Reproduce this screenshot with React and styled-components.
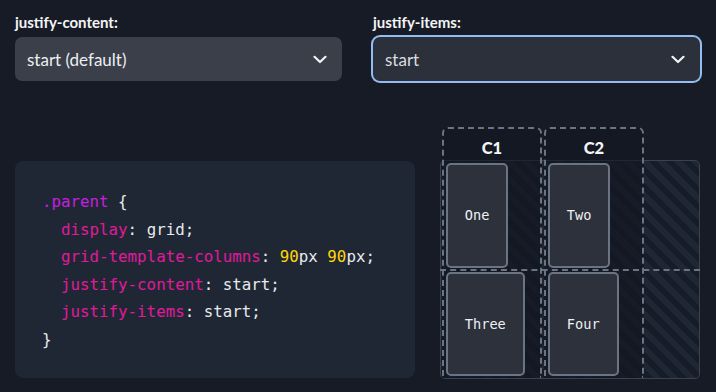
import styled, { createGlobalStyle } from "styled-components";

const GlobalStyle = createGlobalStyle`
    * {
        box-sizing: border-box;
    }
    body {
        margin: 0;
        background-color: #161b26;
        font-family: Lato, "Noto Sans", sans-serif;
        color: #f1f3f6;
    }
`

const controls = [
    { label: "justify-content:", value: "start (default)", focused: false },
    { label: "justify-items:", value: "start", focused: true }
];

const codeLines = [
    [{ t: ".parent", c: "selector" }, { t: " {", c: "plain" }],
    [{ t: "  display", c: "prop" }, { t: ": grid;", c: "plain" }],
    [
        { t: "  grid-template-columns", c: "prop" },
        { t: ": ", c: "plain" },
        { t: "90", c: "num" },
        { t: "px ", c: "plain" },
        { t: "90", c: "num" },
        { t: "px;", c: "plain" }
    ],
    [{ t: "  justify-content", c: "prop" }, { t: ": start;", c: "plain" }],
    [{ t: "  justify-items", c: "prop" }, { t: ": start;", c: "plain" }],
    [{ t: "}", c: "plain" }]
];

const items = ["One", "Two", "Three", "Four"];

function Chevron() {
    return (
        <svg width="14" height="9" viewBox="0 0 14 9" fill="none">
            <path
                d="M1.5 1.8 L7 7 L12.5 1.8"
                stroke="#f3f4f6"
                strokeWidth="2.2"
                strokeLinecap="round"
                strokeLinejoin="round"
            />
        </svg>
    );
}

export default function App() {
    return (
        <Page>
            <GlobalStyle />
            <Controls>
                {controls.map((control) => (
                    <Field key={control.label}>
                        <Label>{control.label}</Label>
                        <Select focused={control.focused}>
                            <span>{control.value}</span>
                            <Chevron />
                        </Select>
                    </Field>
                ))}
            </Controls>
            <Demo>
                <CodeBlock>
                    {codeLines.map((line, i) => (
                        <CodeLine key={i}>
                            {line.map((part, j) => (
                                <Token key={j} kind={part.c}>{part.t}</Token>
                            ))}
                        </CodeLine>
                    ))}
                </CodeBlock>
                <Visual>
                    <ColumnGuide left={2}>
                        <ColumnName>C1</ColumnName>
                    </ColumnGuide>
                    <ColumnGuide left={104}>
                        <ColumnName>C2</ColumnName>
                    </ColumnGuide>
                    <GridBox>
                        <RowLine />
                        {items.map((item) => (
                            <Item key={item}>{item}</Item>
                        ))}
                    </GridBox>
                </Visual>
            </Demo>
        </Page>
    );
}

const Page = styled.div`
    width: 716px;
    height: 392px;
    padding: 11px 16px 0 15px;
    overflow: hidden;
`
const Controls = styled.div`
    display: grid;
    grid-template-columns: 327px 327px;
    column-gap: 31px;
`
const Field = styled.div`
    display: flex;
    flex-direction: column;
`
const Label = styled.span`
    font-size: 15px;
    font-weight: 700;
    line-height: 22px;
    margin-bottom: 4px;
    color: #f3f4f6;
`
const Select = styled.div`
    height: 44px;
    display: flex;
    align-items: center;
    justify-content: space-between;
    padding: 0 15px 0 12px;
    border-radius: 7px;
    background-color: ${(props) => (props.focused ? "#2b303a" : "#3a3f4a")};
    box-shadow: ${(props) => (props.focused ? "0 0 0 2px #93bdf2" : "none")};
    font-size: 17px;
    color: ${(props) => (props.focused ? "#d9dce1" : "#eceef1")};
    > svg {
        margin-top: 1px;
    }
`
const Demo = styled.div`
    display: flex;
    align-items: flex-end;
    gap: 25px;
    margin-top: 46px;
`
const CodeBlock = styled.div`
    width: 401px;
    padding: 27px 27px 25px;
    margin-bottom: 1px;
    border-radius: 8px;
    background-color: #1f2734;
    font-family: "DejaVu Sans Mono", monospace;
    font-size: 15.8px;
    line-height: 27.5px;
    white-space: pre;
`
const CodeLine = styled.div`
    height: 27.5px;
`
const tokenColors = {
    selector: "#c81ee0",
    prop: "#e2199d",
    num: "#ffd60a",
    plain: "#e8eaee"
};
const Token = styled.span`
    color: ${(props) => tokenColors[props.kind]};
`
const Visual = styled.div`
    position: relative;
    width: 261px;
    padding-top: 33px;
`
const ColumnGuide = styled.div`
    position: absolute;
    top: 0;
    bottom: 1px;
    left: ${(props) => props.left}px;
    width: 100px;
    z-index: 1;
    border: 2px dashed #6b7483;
    border-bottom: none;
    border-radius: 6px 6px 0 0;
    background-color: rgba(18, 23, 32, 0.62);
`
const ColumnName = styled.div`
    height: 36px;
    display: flex;
    align-items: center;
    justify-content: center;
    padding-top: 2px;
    font-size: 16.5px;
    font-weight: 900;
    color: #f3f4f6;
`
const GridBox = styled.div`
    height: 219px;
    display: grid;
    grid-template-columns: 100px 100px;
    grid-template-rows: 1fr 1fr;
    column-gap: 2px;
    justify-items: start;
    padding-left: 1px;
    border: 1px solid #3a4250;
    border-radius: 5px;
    background: repeating-linear-gradient(
        45deg,
        #161c28 0px,
        #161c28 6px,
        #1f2634 6px,
        #1f2634 12px
    );
`
const RowLine = styled.div`
    position: absolute;
    left: 0;
    right: 0;
    top: 142px;
    z-index: 2;
    border-top: 2px dashed #6b7483;
`
const Item = styled.div`
    position: relative;
    z-index: 2;
    margin: 2px 4px;
    padding: 0 17px;
    display: flex;
    align-items: center;
    justify-content: center;
    border: 2px solid #6b7483;
    border-radius: 5px;
    background-color: #2c313c;
    font-family: "DejaVu Sans Mono", monospace;
    font-size: 13.6px;
    color: #eef0f3;
`
